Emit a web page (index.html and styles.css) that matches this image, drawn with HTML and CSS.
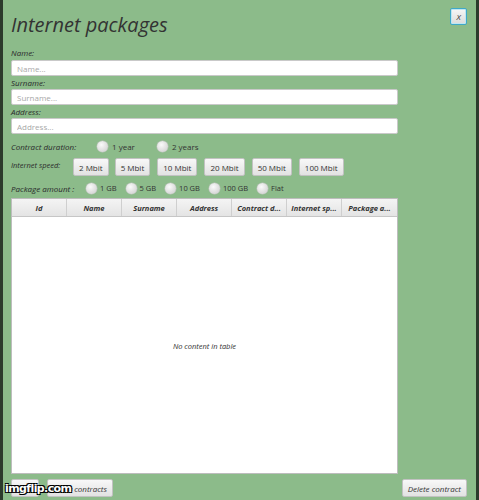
FILE: index.html
```html
<!DOCTYPE html>
<html>
<head>
<meta charset="utf-8">
<link rel="stylesheet" href="styles.css">
</head>
<body>
<div class="window">
  <div class="top">
    <h1 class="title">Internet packages</h1>
    <button class="close">X</button>
  </div>
  <div class="form">
    <label class="lbl">Name:</label>
    <input class="field" placeholder="Name...">
    <label class="lbl">Surname:</label>
    <input class="field" placeholder="Surname...">
    <label class="lbl">Address:</label>
    <input class="field" placeholder="Address...">
  </div>
  <div class="row duration">
    <span class="rlabel w-dur">Contract duration:</span>
    <span class="radio"><i></i>1 year</span>
    <span class="radio gap2"><i></i>2 years</span>
  </div>
  <div class="row speed">
    <span class="rlabel w-speed">Internet speed:</span>
    <button class="btn">2 Mbit</button>
    <button class="btn">5 Mbit</button>
    <button class="btn">10 Mbit</button>
    <button class="btn">20 Mbit</button>
    <button class="btn">50 Mbit</button>
    <button class="btn">100 Mbit</button>
  </div>
  <div class="row amount">
    <span class="rlabel w-amt">Package amount :</span>
    <span class="radio"><i></i>1 GB</span>
    <span class="radio"><i></i>5 GB</span>
    <span class="radio"><i></i>10 GB</span>
    <span class="radio"><i></i>100 GB</span>
    <span class="radio"><i></i>Flat</span>
  </div>
  <div class="table">
    <div class="thead">
      <div class="th">Id</div>
      <div class="th">Name</div>
      <div class="th">Surname</div>
      <div class="th">Address</div>
      <div class="th">Contract d...</div>
      <div class="th">Internet sp...</div>
      <div class="th">Package a...</div>
    </div>
    <div class="tbody">No content in table</div>
  </div>
  <div class="bottom">
    <button class="btn ibtn">Save</button>
    <button class="btn ibtn">Show contracts</button>
    <span class="spacer"></span>
    <button class="btn ibtn">Delete contract</button>
  </div>
  <div class="watermark">imgflip.com</div>
</div>
</body>
</html>
```

FILE: styles.css
```css
html, body {
  margin: 0;
  padding: 0;
  background: #2c3a2c;
}
body {
  padding: 0 3px;
  font-family: "Open Sans", "DejaVu Sans", sans-serif;
}
.window {
  position: relative;
  height: 500px;
  background: #8cbb8a;
  padding: 0 8px 0 8px;
  box-sizing: border-box;
  color: #2a2a2a;
}
.top {
  display: flex;
  justify-content: space-between;
  align-items: flex-start;
  height: 45px;
}
.title {
  margin: 11px 0 0 0;
  font-size: 20px;
  font-style: italic;
  font-weight: 400;
  color: #333;
}
.close {
  margin: 8px 1px 0 0;
  width: 17px;
  height: 17px;
  padding: 0;
  border: 1px solid #3fa8c8;
  border-radius: 2px;
  background: linear-gradient(#f6f6f6, #dcdcdc);
  box-shadow: inset 0 0 0 1px #bfe6f2;
  font: italic 8px "Open Sans", sans-serif;
  color: #333;
}
.form {
  display: flex;
  flex-direction: column;
  width: 387px;
}
.lbl {
  font-size: 8px;
  font-style: italic;
  height: 11px;
  line-height: 11px;
  margin-top: 1px;
  margin-bottom: 1px;
}
.form .lbl:first-child {
  margin-top: 2px;
  margin-bottom: 2px;
}
.field {
  height: 16px;
  box-sizing: border-box;
  border: 1px solid #c9c9c9;
  border-radius: 2px;
  background: #fff;
  padding: 0 5px;
  font: 8px "Open Sans", sans-serif;
  outline: none;
}
.field::placeholder {
  color: #a8a8a8;
}
.row {
  display: flex;
  align-items: center;
  font-size: 8px;
}
.duration {
  margin-top: 6px;
  height: 13px;
}
.rlabel {
  font-style: italic;
  font-size: 8px;
}
.w-dur { width: 86px; }
.w-speed { width: 62px; font-size: 7.5px; }
.w-amt { width: 75px; }
.radio {
  display: flex;
  align-items: center;
  margin-right: 9px;
  color: #333;
  font-size: 7.5px;
}
.duration .radio { margin-right: 22px; font-size: 8px; }
.radio i {
  display: inline-block;
  width: 11px;
  height: 11px;
  border-radius: 50%;
  background: radial-gradient(circle at 40% 35%, #fafafa, #d6d6d6 75%);
  box-shadow: 0 0 0 0.5px #c0c0c0;
  margin-right: 3px;
}
.duration .radio i { margin-right: 4px; }
.speed {
  margin-top: 5px;
  height: 18px;
  gap: 6px;
}
.speed .rlabel { margin-right: -6px; margin-top: -5px; }
.btn {
  height: 18px;
  padding: 0 5px;
  border: 1px solid #c2c2c2;
  border-radius: 2px;
  background: linear-gradient(#f8f8f8, #e2e2e2);
  font: 8px "Open Sans", sans-serif;
  color: #333;
}
.speed .btn:nth-of-type(n+3) { margin-left: 1px; }
.amount {
  margin-top: 5px;
  height: 14px;
}
.table {
  margin-top: 3px;
  width: 387px;
  height: 276px;
  display: flex;
  flex-direction: column;
  background: #fff;
  border: 1px solid #bdbdbd;
  box-sizing: border-box;
}
.thead {
  display: grid;
  grid-template-columns: repeat(7, 1fr);
  height: 17px;
  background: linear-gradient(#f4f4f4, #e4e4e4);
  border-bottom: 1px solid #c6c6c6;
}
.th {
  font-size: 7.5px;
  font-weight: 700;
  font-style: italic;
  display: flex;
  align-items: center;
  justify-content: center;
  border-right: 1px solid #cfcfcf;
  color: #333;
  white-space: nowrap;
}
.th:last-child { border-right: none; }
.tbody {
  flex: 1;
  display: flex;
  align-items: center;
  justify-content: center;
  font-size: 7.5px;
  font-style: italic;
  color: #333;
  padding-top: 2px;
}
.bottom {
  display: flex;
  align-items: center;
  margin-top: 5px;
  width: 456px;
  gap: 8px;
}
.bottom .ibtn {
  font-style: italic;
  padding: 0 5px;
}
.spacer { flex: 1; }
.watermark {
  position: absolute;
  left: 2px;
  top: 482px;
  font: bold 11px "DejaVu Sans", sans-serif;
  color: #fff;
  letter-spacing: -0.6px;
  text-shadow: -1px -1px 0 #000, 1px -1px 0 #000, -1px 1px 0 #000, 1px 1px 0 #000;
}
```
